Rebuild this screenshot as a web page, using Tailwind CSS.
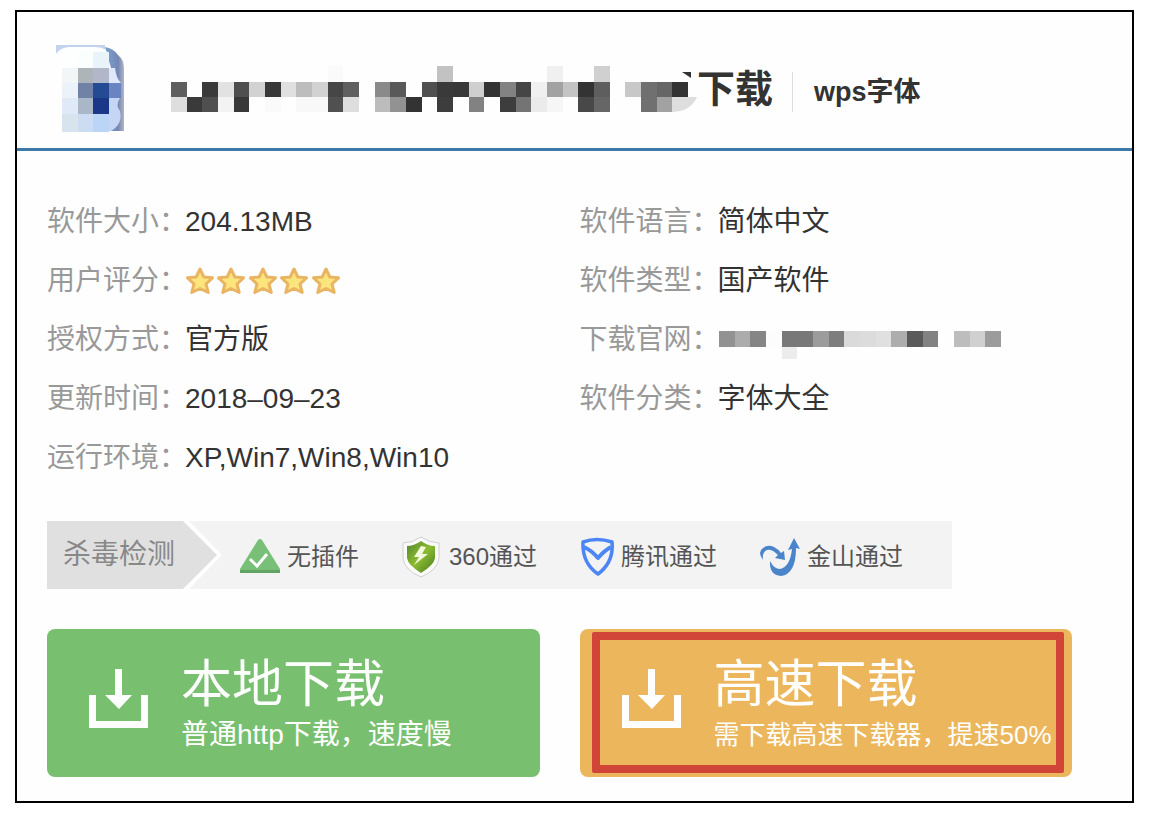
<!DOCTYPE html>
<html lang="zh-CN">
<head>
  <meta charset="UTF-8" />
  <meta name="viewport" content="width=device-width, initial-scale=1.0"/>
  <title>软件下载</title>
  <script src="https://cdn.jsdelivr.net/npm/@tailwindcss/browser@4"></script>
</head>
<body class="bg-white font-['Liberation_Sans','Noto_Sans_CJK_SC',sans-serif] text-[#333]">

  <main class="mt-[10px] ml-[15px] mr-[17px] border-2 border-black bg-[#fefefe]">

    <!-- Title -->
    <header class="flex h-[139px] items-center border-b-3 border-[#3c78a8] pt-[18px] pl-[38px]">
      <svg class="w-[74px] h-[90px] shrink-0" viewBox="0 0 74 90" aria-hidden="true">
        <defs>
          <linearGradient id="edge" x1="0" y1="0" x2="1" y2="0">
            <stop offset="0" stop-color="#7d9fd3"/>
            <stop offset="0.7" stop-color="#7488b4"/>
            <stop offset="1" stop-color="#b4b4c6"/>
          </linearGradient>
        </defs>
        <path d="M1 1H50V6H12Q4 5 1 10z" fill="#c3d3ee"/>
        <path d="M50 3Q58 4 63 11Q69 16 69 24V87H56L60 60L56 24z" fill="url(#edge)"/>
        <path d="M2 10Q4 4 14 3H40Q52 3 54 12V24H7V14z" fill="#fdfefe"/>
        <path d="M54 24H60Q61 34 66 39H54z" fill="#dfe8fa"/>
        <path d="M54 54H65Q60 61 65 67Q68 80 56 87H54z" fill="#c5d6f4"/>
        <path d="M23 8H38V24H23z" fill="#fafefd"/>
        <path d="M38 8H54V24H38z" fill="#e8f4fa"/>
        <path d="M7 24H23V39H7z" fill="#f3f6f7"/>
        <path d="M7 39H23V54H7z" fill="#ecf2fa"/>
        <path d="M7 54H23V70H7z" fill="#e0e9f8"/>
        <path d="M7 70H23V88H7z" fill="#d7e4ee"/>
        <path d="M23 24H38V39H23z" fill="#adb5b8"/>
        <path d="M38 24H54V39H38z" fill="#b1b6c8"/>
        <path d="M23 39H38V54H23z" fill="#7082a5"/>
        <path d="M38 39H54V54H38z" fill="#254a94"/>
        <path d="M54 39H66V54H54z" fill="#6a84c2"/>
        <path d="M23 54H38V70H23z" fill="#aab7c6"/>
        <path d="M38 54H54V70H38z" fill="#1b3788"/>
        <path d="M23 70H38V88H23z" fill="#cbdcf3"/>
        <path d="M38 70H54V88H38z" fill="#bbd5f6"/>
      </svg>
      <h1 class="ml-[42px] flex items-center text-[38px] leading-[46px] font-bold">
        <svg id="name" class="w-[526px] h-[46px] shrink-0" viewBox="0 0 526 46" aria-hidden="true">
          <path d="M511 6H520V12z" fill="#333"/>
          <path d="M517 31H526Q520 45 502 46H490V31z" fill="#dedede"/>
        </svg>
        下载
      </h1>
      <a href="#" class="mt-1.5 ml-[19px] border-l border-[#ddd] pl-[21px] text-[27px] leading-10 font-bold">wps字体</a>
    </header>

    <div class="pt-[41px] pr-[60px] pb-6 pl-[30px]">

      <!-- Info -->
      <div class="grid grid-cols-2 gap-10 text-[28px] leading-[59px] whitespace-nowrap">
        <dl>
          <div class="flex"><dt class="w-[138px] text-[#999]">软件大小：</dt><dd>204.13MB</dd></div>
          <div class="flex">
            <dt class="w-[138px] text-[#999]">用户评分：</dt>
            <dd class="flex items-center" role="img" aria-label="5">
              <svg class="w-[158px] h-7" viewBox="0 0 158 28" fill="#fbe57c" stroke="#eab562" stroke-width="3" stroke-linejoin="round">
                <defs><path id="star" d="M14 2L17.800 10L26.500 10.800L20 17L22.200 25.500L14 21.500L5.800 25.500L8 17L1.500 10.800L10.200 10z"/></defs>
                <use href="#star" x="1" y="0"/>
                <use href="#star" x="32" y="0"/>
                <use href="#star" x="64" y="0"/>
                <use href="#star" x="95" y="0"/>
                <use href="#star" x="127" y="0"/>
              </svg>
            </dd>
          </div>
          <div class="flex"><dt class="w-[138px] text-[#999]">授权方式：</dt><dd>官方版</dd></div>
          <div class="flex"><dt class="w-[138px] text-[#999]">更新时间：</dt><dd>2018–09–23</dd></div>
          <div class="flex"><dt class="w-[138px] text-[#999]">运行环境：</dt><dd>XP,Win7,Win8,Win10</dd></div>
        </dl>
        <dl>
          <div class="flex"><dt class="w-[138px] text-[#999]">软件语言：</dt><dd>简体中文</dd></div>
          <div class="flex"><dt class="w-[138px] text-[#999]">软件类型：</dt><dd>国产软件</dd></div>
          <div class="flex">
            <dt class="w-[138px] text-[#999]">下载官网：</dt>
            <dd class="flex items-center pt-2.5">
              <svg id="site" class="w-[284px] h-7" viewBox="0 0 284 28" aria-hidden="true"></svg>
            </dd>
          </div>
          <div class="flex"><dt class="w-[138px] text-[#999]">软件分类：</dt><dd>字体大全</dd></div>
        </dl>
      </div>

      <!-- Virus scan -->
      <div class="mt-[34px] mr-[120px] flex h-[68px] items-center bg-[#f3f3f3] whitespace-nowrap">
        <div class="h-full bg-white pr-[5px] [clip-path:polygon(0_0,142px_0,100%_50%,142px_100%,0_100%)]">
          <h2 class="flex h-full w-[170px] items-center bg-[#e0e0e0] pl-4 text-[28px] text-[#888] [clip-path:polygon(0_0,136px_0,100%_50%,136px_100%,0_100%)]">杀毒检测</h2>
        </div>
        <ul class="mt-1 ml-[18px] flex items-center gap-[43px] text-2xl text-[#555]">
          <li class="flex items-center gap-[7px]">
            <svg class="w-10 h-[42px]" viewBox="0 0 40 42">
              <path d="M18 4Q20 2 22 4L40 33V36H0V33z" fill="#78bf78"/>
              <path d="M0 34H40V37H0z" fill="#62a464"/>
              <path d="M10 23L17 30L27 18" fill="none" stroke="#fff" stroke-width="3"/>
            </svg>
            无插件
          </li>
          <li class="flex items-center gap-[7px]">
            <svg class="w-10 h-[42px]" viewBox="0 0 40 42">
              <defs>
                <linearGradient id="green" x1="0" y1="0" x2="1" y2="1">
                  <stop offset="0" stop-color="#55852d"/>
                  <stop offset="0.5" stop-color="#8dbc32"/>
                  <stop offset="1" stop-color="#477a20"/>
                </linearGradient>
              </defs>
              <path d="M19 1Q28 7 37 7V22Q36 34 19 41Q2 34 1 22V7Q10 7 19 1z" fill="#fafafa" stroke="#d0d0d0"/>
              <path d="M19 5Q26 10 33 10V22Q32 29 19 37Q6 29 5 22V10Q12 10 19 5z" fill="url(#green)"/>
              <path d="M19 10L24 11L20 18H26L12 29L17 21H12z" fill="#f2f9dc"/>
            </svg>
            360通过
          </li>
          <li class="flex items-center gap-[7px]">
            <svg class="w-[34px] h-[42px]" viewBox="0 0 34 42" fill="none" stroke="#4c86f5" stroke-width="3.500" stroke-linejoin="round">
              <path d="M3 6Q17 1 32 6Q34 26 18 38Q2 27 3 6z"/>
              <path d="M4 11Q11 14 18 22Q25 14 31 11" stroke-width="4"/>
            </svg>
            腾讯通过
          </li>
          <li class="flex items-center gap-[7px]">
            <svg class="w-10 h-[42px]" viewBox="0 0 40 42" fill="#4a85cb">
              <path d="M3 24Q-3 16 3 12Q8 8 14 11Q18 13 21 17L24 15L25 24L15 22L18 19Q12 13 7 14Q2 16 3 24z"/>
              <path d="M10 25Q14 33 20 33Q30 31 32 13L28 14L34 2L40 13L36 12Q36 38 21 40Q9 39 10 25z"/>
            </svg>
            金山通过
          </li>
        </ul>
      </div>

      <!-- Downloads -->
      <div class="mt-10 grid grid-cols-2 gap-10 whitespace-nowrap text-white">
        <button type="button" class="flex h-[148px] items-center rounded-lg bg-[#78c070] pt-1 pl-[42px] text-left">
          <svg class="mb-3 w-[60px] h-[60px] shrink-0" viewBox="0 0 60 60" fill="#fff">
            <path d="M0 26H7V52H52V26H59V59H0z"/>
            <path d="M26 0H33V26H43L30 40L16 26H26z"/>
          </svg>
          <span class="ml-8">
            <span class="block text-[51px] leading-[60px]">本地下载</span>
            <span class="block text-[28px] leading-10">普通http下载，速度慢</span>
          </span>
        </button>
        <button type="button" class="relative flex h-[148px] items-center rounded-lg bg-[#ecb75c] pt-1 pl-[42px] text-left">
          <svg class="mb-3 w-[60px] h-[60px] shrink-0" viewBox="0 0 60 60" fill="#fff">
            <path d="M0 26H7V52H52V26H59V59H0z"/>
            <path d="M26 0H33V26H43L30 40L16 26H26z"/>
          </svg>
          <span class="ml-8">
            <span class="block text-[51px] leading-[60px]">高速下载</span>
            <span class="block text-[26px] leading-10">需下载高速下载器，提速50%</span>
          </span>
          <span class="absolute top-[3px] right-2 bottom-1 left-3 rounded-xs border-8 border-[#d04537]"></span>
        </button>
      </div>
    </div>
  </main>

  <script>
    // one row per entry: top, height, then column -> grey level
    const mosaics = {
      name: [
        [0, 16, { 10: 250, 17: 194, 24: 240, 27: 208 }],
        [16, 15, { 0: 94, 2: 58, 3: 226, 4: 79, 5: 210, 6: 56, 7: 224, 8: 189, 9: 210, 10: 70, 11: 96,
          13: 138, 14: 89, 16: 80, 17: 58, 18: 56, 19: 207, 20: 51, 21: 130, 22: 69, 23: 240, 24: 162,
          25: 196, 26: 51, 27: 94, 29: 200, 30: 112, 31: 102, 32: 51 }],
        [31, 15, { 0: 222, 1: 58, 2: 79, 3: 243, 4: 56, 6: 250, 8: 248, 9: 248, 10: 80, 11: 222,
          13: 188, 14: 146, 15: 51, 17: 61, 19: 130, 21: 61, 22: 116, 23: 235, 24: 246, 26: 72, 27: 102,
          30: 112, 31: 162 }]
      ],
      site: [
        [0, 16, { 0: 146, 1: 172, 2: 133, 3: 252, 4: 120, 5: 120, 6: 156, 7: 125, 8: 218, 9: 220,
          10: 224, 11: 173, 12: 90, 13: 130, 15: 189, 16: 208, 17: 156 }],
        [16, 12, { 4: 236 }]
      ]
    };

    for (const id in mosaics) {
      const svg = document.getElementById(id);
      for (const [top, height, cells] of mosaics[id]) {
        for (const col in cells) {
          const left = Math.round(col * 15.67);
          const rect = document.createElementNS('http://www.w3.org/2000/svg', 'rect');
          rect.setAttribute('x', left + (id === 'site' ? 1 : 0));
          rect.setAttribute('y', top);
          rect.setAttribute('width', Math.round((Number(col) + 1) * 15.67) - left);
          rect.setAttribute('height', height);
          rect.setAttribute('fill', `rgb(${cells[col]},${cells[col]},${cells[col]})`);
          svg.appendChild(rect);
        }
      }
    }
  </script>
</body>
</html>
